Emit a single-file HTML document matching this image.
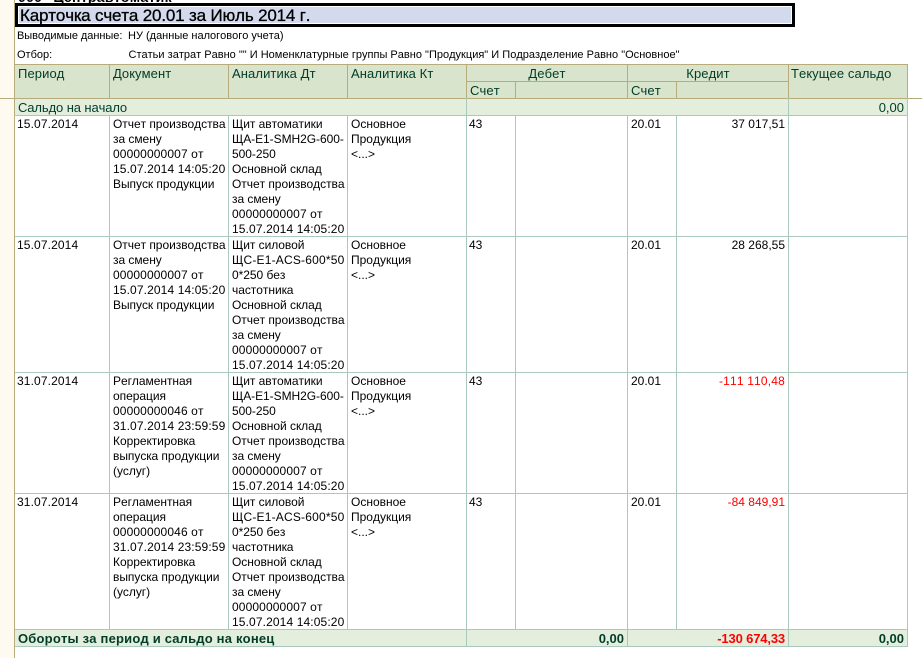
<!DOCTYPE html>
<html lang="ru"><head><meta charset="utf-8"><title>Карточка счета</title>
<style>
html,body{margin:0;padding:0;background:#fff}
#p{position:relative;width:922px;height:658px;overflow:hidden;background:#fff;font-family:"Liberation Sans",Arial,sans-serif;font-size:12px;color:#000;font-kerning:none}
.r{position:absolute}
.t{position:absolute;white-space:pre;line-height:15px}
.g{color:#003c28}
.h{font-size:13px;letter-spacing:.1px}
.f{font-size:13px}
.d{letter-spacing:.12px}
.a{text-align:right}
.b{font-weight:bold}
.red{color:#f00}
</style></head><body><div id="p">
<div class="r" style="left:0;top:0;width:14px;height:658px;background:#fffaf0"></div>
<div class="r" style="left:14px;top:0;width:1px;height:658px;background:#b8ab7c"></div>
<div class="t b" style="left:18px;top:-10px;font-size:14px;letter-spacing:.3px">000 "Центравтоматик"</div>
<div class="r" style="left:15px;top:3px;border:3px solid #000;background:#d4daee;box-shadow:inset 0 0 0 1px #fff;width:774px;height:18px"></div>
<div class="t" style="left:20px;top:7px;font-size:17px;line-height:18px;letter-spacing:-.17px;-webkit-text-stroke:.3px #000">Карточка счета 20.01 за Июль 2014 г.</div>
<div class="t" style="left:17px;top:29px;font-size:11px;letter-spacing:-.05px">Выводимые данные:</div>
<div class="t" style="left:128px;top:29px;font-size:11px">НУ (данные налогового учета)</div>
<div class="t" style="left:17px;top:48px;font-size:11px">Отбор:</div>
<div class="t" style="left:128.5px;top:48px;font-size:11px;letter-spacing:.01px">Статьи затрат Равно "" И Номенклатурные группы Равно "Продукция" И Подразделение Равно "Основное"</div>

<!-- header -->
<div class="r" style="left:15px;top:64px;width:893px;height:34px;background:#d8e4cc"></div>
<div class="r" style="left:15px;top:98px;width:893px;height:17px;background:#e4eedd"></div>
<div class="r" style="left:15px;top:629px;width:893px;height:17px;background:#e4eedd"></div>

<!-- gutter line at row 98 -->
<div class="r" style="left:0;top:98px;width:922px;height:1px;background:#b8ab7c"></div>
<!-- horizontal lines -->
<div class="r" style="left:14px;top:64px;width:894px;height:1px;background:#b8ab7c"></div>
<div class="r" style="left:466px;top:81px;width:322px;height:1px;background:#b8ab7c"></div>
<div class="r" style="left:14px;top:115px;width:894px;height:1px;background:#aac8bc"></div>
<div class="r" style="left:15px;top:236px;width:893px;height:1px;background:#aac8bc"></div>
<div class="r" style="left:15px;top:372px;width:893px;height:1px;background:#aac8bc"></div>
<div class="r" style="left:15px;top:493px;width:893px;height:1px;background:#aac8bc"></div>
<div class="r" style="left:15px;top:629px;width:893px;height:1px;background:#aac8bc"></div>
<div class="r" style="left:15px;top:646px;width:893px;height:1px;background:#aac8bc"></div>

<!-- header verticals -->
<div class="r" style="left:109px;top:64px;width:1px;height:34px;background:#b8ab7c"></div>
<div class="r" style="left:228px;top:64px;width:1px;height:34px;background:#b8ab7c"></div>
<div class="r" style="left:347px;top:64px;width:1px;height:34px;background:#b8ab7c"></div>
<div class="r" style="left:466px;top:64px;width:1px;height:34px;background:#b8ab7c"></div>
<div class="r" style="left:515px;top:81px;width:1px;height:17px;background:#b8ab7c"></div>
<div class="r" style="left:627px;top:64px;width:1px;height:34px;background:#b8ab7c"></div>
<div class="r" style="left:676px;top:81px;width:1px;height:17px;background:#b8ab7c"></div>
<div class="r" style="left:788px;top:64px;width:1px;height:34px;background:#b8ab7c"></div>
<div class="r" style="left:907px;top:64px;width:1px;height:34px;background:#b8ab7c"></div>

<!-- body verticals -->
<div class="r" style="left:109px;top:115px;width:1px;height:514px;background:#aac8bc"></div>
<div class="r" style="left:228px;top:115px;width:1px;height:514px;background:#aac8bc"></div>
<div class="r" style="left:347px;top:115px;width:1px;height:514px;background:#aac8bc"></div>
<div class="r" style="left:466px;top:98px;width:1px;height:548px;background:#aac8bc"></div>
<div class="r" style="left:515px;top:115px;width:1px;height:514px;background:#aac8bc"></div>
<div class="r" style="left:627px;top:115px;width:1px;height:531px;background:#aac8bc"></div>
<div class="r" style="left:676px;top:115px;width:1px;height:514px;background:#aac8bc"></div>
<div class="r" style="left:788px;top:98px;width:1px;height:548px;background:#aac8bc"></div>
<div class="r" style="left:907px;top:98px;width:1px;height:548px;background:#aac8bc"></div>

<!-- header text -->
<div class="t g h" style="left:18px;top:66px">Период</div>
<div class="t g h" style="left:113px;top:66px">Документ</div>
<div class="t g h" style="left:232px;top:66px">Аналитика Дт</div>
<div class="t g h" style="left:351px;top:66px">Аналитика Кт</div>
<div class="t g h" style="left:467px;top:66px;width:160px;text-align:center">Дебет</div>
<div class="t g h" style="left:628px;top:66px;width:160px;text-align:center">Кредит</div>
<div class="t g h" style="left:791px;top:66px">Текущее сальдо</div>
<div class="t g h" style="left:470px;top:83px">Счет</div>
<div class="t g h" style="left:631px;top:83px">Счет</div>
<div class="t g f" style="left:18px;top:100px;letter-spacing:-.1px">Сальдо на начало</div>
<div class="t g a f" style="left:800px;top:100px;width:104px">0,00</div>

<!-- row 1 -->
<div class="t d" style="left:17px;top:117px">15.07.2014</div>
<div class="t" style="left:113px;top:117px;letter-spacing:-.04px">Отчет производства
за смену
<span class="d">00000000007 от
15.07.2014 14:05:20</span>
Выпуск продукции</div>
<div class="t" style="left:232px;top:117px;letter-spacing:-.04px">Щит автоматики
<span style="letter-spacing:-.05px">ЩА-Е1-SMH2G-600-</span>
500-250
Основной склад
Отчет производства
за смену
<span class="d">00000000007 от
15.07.2014 14:05:20</span></div>
<div class="t" style="left:351px;top:117px">Основное
Продукция
&lt;...&gt;</div>
<div class="t" style="left:469px;top:117px">43</div>
<div class="t" style="left:631px;top:117px">20.01</div>
<div class="t a" style="left:680px;top:117px;width:105px">37 017,51</div>

<!-- row 2 -->
<div class="t d" style="left:17px;top:238px">15.07.2014</div>
<div class="t" style="left:113px;top:238px;letter-spacing:-.04px">Отчет производства
за смену
<span class="d">00000000007 от
15.07.2014 14:05:20</span>
Выпуск продукции</div>
<div class="t" style="left:232px;top:238px;letter-spacing:-.04px">Щит силовой
<span style="letter-spacing:.2px">ЩС-Е1-ACS-600*50</span>
0*250 без
частотника
Основной склад
Отчет производства
за смену
<span class="d">00000000007 от
15.07.2014 14:05:20</span></div>
<div class="t" style="left:351px;top:238px">Основное
Продукция
&lt;...&gt;</div>
<div class="t" style="left:469px;top:238px">43</div>
<div class="t" style="left:631px;top:238px">20.01</div>
<div class="t a" style="left:680px;top:238px;width:105px">28 268,55</div>

<!-- row 3 -->
<div class="t d" style="left:17px;top:374px">31.07.2014</div>
<div class="t" style="left:113px;top:374px;letter-spacing:-.04px">Регламентная
операция
<span class="d">00000000046 от
31.07.2014 23:59:59</span>
Корректировка
выпуска продукции
(услуг)</div>
<div class="t" style="left:232px;top:374px;letter-spacing:-.04px">Щит автоматики
<span style="letter-spacing:-.05px">ЩА-Е1-SMH2G-600-</span>
500-250
Основной склад
Отчет производства
за смену
<span class="d">00000000007 от
15.07.2014 14:05:20</span></div>
<div class="t" style="left:351px;top:374px">Основное
Продукция
&lt;...&gt;</div>
<div class="t" style="left:469px;top:374px">43</div>
<div class="t" style="left:631px;top:374px">20.01</div>
<div class="t a red" style="left:680px;top:374px;width:105px;letter-spacing:.18px">-111 110,48</div>

<!-- row 4 -->
<div class="t d" style="left:17px;top:495px">31.07.2014</div>
<div class="t" style="left:113px;top:495px;letter-spacing:-.04px">Регламентная
операция
<span class="d">00000000046 от
31.07.2014 23:59:59</span>
Корректировка
выпуска продукции
(услуг)</div>
<div class="t" style="left:232px;top:495px;letter-spacing:-.04px">Щит силовой
<span style="letter-spacing:.2px">ЩС-Е1-ACS-600*50</span>
0*250 без
частотника
Основной склад
Отчет производства
за смену
<span class="d">00000000007 от
15.07.2014 14:05:20</span></div>
<div class="t" style="left:351px;top:495px">Основное
Продукция
&lt;...&gt;</div>
<div class="t" style="left:469px;top:495px">43</div>
<div class="t" style="left:631px;top:495px">20.01</div>
<div class="t a red" style="left:680px;top:495px;width:105px">-84 849,91</div>

<!-- footer -->
<div class="t g b f" style="left:18px;top:631px;letter-spacing:.2px">Обороты за период и сальдо на конец</div>
<div class="t g b a f" style="left:500px;top:631px;width:124px">0,00</div>
<div class="t b a red f" style="left:660px;top:631px;width:125px;letter-spacing:-.15px">-130 674,33</div>
<div class="t g b a f" style="left:800px;top:631px;width:104px">0,00</div>
</div></body></html>
